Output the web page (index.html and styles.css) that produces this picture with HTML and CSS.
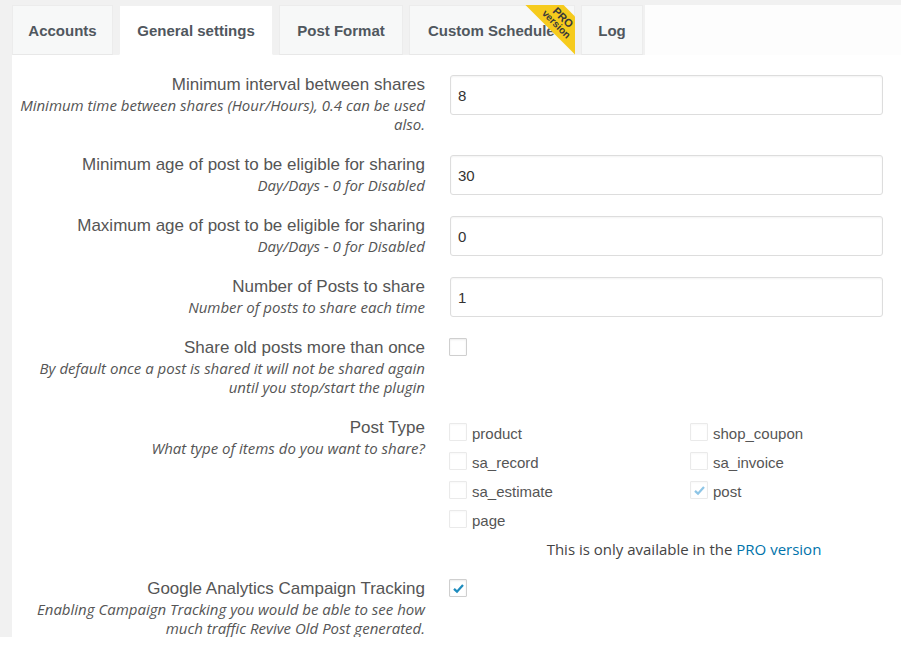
FILE: index.html
```html
<!DOCTYPE html>
<html>
<head>
<meta charset="utf-8">
<link rel="stylesheet" href="styles.css">
</head>
<body>
<div class="wrap">
  <nav class="tabs">
    <div class="tab t-acc">Accounts</div>
    <div class="tab t-gen active">General settings</div>
    <div class="tab t-fmt">Post Format</div>
    <div class="tab t-sch">Custom Schedule
      <div class="ribbon-box"><div class="ribbon"><span class="r-pro">PRO</span><span class="r-ver">version</span></div></div>
    </div>
    <div class="tab t-log">Log</div>
    <div class="tab-fill"></div>
  </nav>
  <div class="panel">
    <div class="row">
      <div class="lab">
        <div class="title">Minimum interval between shares</div>
        <div class="desc">Minimum time between shares (Hour/Hours), 0.4 can be used<br>also.</div>
      </div>
      <div class="field"><div class="input">8</div></div>
    </div>
    <div class="row">
      <div class="lab">
        <div class="title">Minimum age of post to be eligible for sharing</div>
        <div class="desc">Day/Days - 0 for Disabled</div>
      </div>
      <div class="field"><div class="input">30</div></div>
    </div>
    <div class="row">
      <div class="lab">
        <div class="title">Maximum age of post to be eligible for sharing</div>
        <div class="desc">Day/Days - 0 for Disabled</div>
      </div>
      <div class="field"><div class="input">0</div></div>
    </div>
    <div class="row">
      <div class="lab">
        <div class="title">Number of Posts to share</div>
        <div class="desc">Number of posts to share each time</div>
      </div>
      <div class="field"><div class="input">1</div></div>
    </div>
    <div class="row">
      <div class="lab">
        <div class="title">Share old posts more than once</div>
        <div class="desc">By default once a post is shared it will not be shared again<br>until you stop/start the plugin</div>
      </div>
      <div class="field"><span class="cb"></span></div>
    </div>
    <div class="row">
      <div class="lab">
        <div class="title">Post Type</div>
        <div class="desc">What type of items do you want to share?</div>
      </div>
      <div class="field">
        <div class="types">
          <div class="type"><span class="cb dis"></span>product</div>
          <div class="type"><span class="cb dis"></span>shop_coupon</div>
          <div class="type"><span class="cb dis"></span>sa_record</div>
          <div class="type"><span class="cb dis"></span>sa_invoice</div>
          <div class="type"><span class="cb dis"></span>sa_estimate</div>
          <div class="type"><span class="cb dis"><svg class="chk light" viewBox="0 0 16 16"><path d="M3.2 8.4 L6.4 11.4 L12.8 4.2" /></svg></span>post</div>
          <div class="type"><span class="cb dis"></span>page</div>
        </div>
        <div class="note">This is only available in the <span class="link">PRO version</span></div>
      </div>
    </div>
    <div class="row">
      <div class="lab">
        <div class="title">Google Analytics Campaign Tracking</div>
        <div class="desc">Enabling Campaign Tracking you would be able to see how<br>much traffic Revive Old Post generated.</div>
      </div>
      <div class="field"><span class="cb"><svg class="chk" viewBox="0 0 16 16"><path d="M3.2 8.4 L6.4 11.4 L12.8 4.2" /></svg></span></div>
    </div>
  </div>
</div>
</body>
</html>
```
FILE: styles.css
```css
html, body {
  margin: 0;
  padding: 0;
  background: #ffffff;
}
body {
  font-family: "Liberation Sans", Arial, sans-serif;
  color: #555;
}
.wrap {
  background: #f1f1f1;
  padding: 5px 0 0 12px;
  height: 632px;
  box-sizing: content-box;
  display: flex;
  flex-direction: column;
}
.tabs {
  display: flex;
  height: 50px;
  gap: 6px;
  background: #f1f1f1;
}
.tab {
  position: relative;
  box-sizing: border-box;
  height: 50px;
  padding: 0;
  display: flex;
  align-items: center;
  justify-content: center;
  white-space: nowrap;
  font-weight: bold;
  font-size: 15px;
  color: #50575e;
  background: #f7f8f8;
  border: 1px solid #ececec;
  border-bottom-color: #e8e8e8;
}
.t-acc { width: 101px; }
.t-gen { width: 154px; }
.t-fmt { width: 124px; }
.t-sch { width: 166px; justify-content: flex-start; padding-left: 18px; overflow: visible; }
.t-log { width: 62px; }
.tab.active {
  background: #fff;
  border-color: #f1f1f1;
  border-bottom-color: #fff;
}
.tab-fill {
  flex: 1;
  background: #fdfdfd;
  margin-left: -4px;
}
.ribbon-box {
  position: absolute;
  top: -1px;
  right: -1px;
  width: 50px;
  height: 52px;
  overflow: hidden;
}
.ribbon {
  position: absolute;
  left: -6px;
  top: 2px;
  width: 82px;
  height: 27px;
  background: #f6cb1d;
  transform: rotate(45deg);
  display: flex;
  flex-direction: column;
  align-items: center;
  justify-content: center;
  line-height: 10px;
  color: #3a3a3a;
  font-weight: bold;
}
.r-pro { font-size: 11px; }
.r-ver { font-size: 10px; }
.panel {
  flex: 1;
  background: #fff;
  padding: 18px 18px 0 0;
}
.row {
  display: grid;
  grid-template-columns: 413px 1fr;
  column-gap: 24px;
  padding-bottom: 19px;
}
.lab {
  text-align: right;
  white-space: nowrap;
}
.title {
  font-size: 17px;
  line-height: 23px;
  color: #555;
}
.desc {
  font-family: "Open Sans", sans-serif;
  font-style: italic;
  font-size: 15px;
  line-height: 19px;
  color: #555;
}
.field {
  padding-top: 2px;
}
.input {
  box-sizing: border-box;
  height: 40px;
  margin-left: 1px;
  border: 1px solid #ddd;
  border-radius: 3px;
  box-shadow: inset 0 1px 2px rgba(0,0,0,0.05);
  padding: 0 7px;
  display: flex;
  align-items: center;
  font-size: 15px;
  color: #333;
}
.cb {
  box-sizing: border-box;
  display: inline-flex;
  align-items: center;
  justify-content: center;
  width: 18px;
  height: 18px;
  border: 1px solid #cfcfcf;
  border-radius: 1px;
  background: #fff;
  box-shadow: inset 0 1px 2px rgba(0,0,0,0.08);
  vertical-align: top;
}
.cb.dis {
  border-color: #eaeaea;
  box-shadow: inset 0 1px 2px rgba(0,0,0,0.03);
}
.chk {
  width: 15px;
  height: 15px;
}
.chk path {
  fill: none;
  stroke: #1e8cbe;
  stroke-width: 2.4;
}
.chk.light path {
  stroke: #8ec5e6;
}
.types {
  display: grid;
  grid-template-columns: 241px 1fr;
  margin-top: 5px;
}
.type {
  height: 29px;
  display: flex;
  align-items: flex-start;
  gap: 5px;
  font-size: 15px;
  line-height: 22px;
  color: #555;
}
.note {
  font-family: "Open Sans", sans-serif;
  font-size: 15px;
  line-height: 18px;
  padding-left: 36px;
  text-align: center;
  color: #444;
  margin-top: 1px;
}
.link {
  color: #0073aa;
}
```
